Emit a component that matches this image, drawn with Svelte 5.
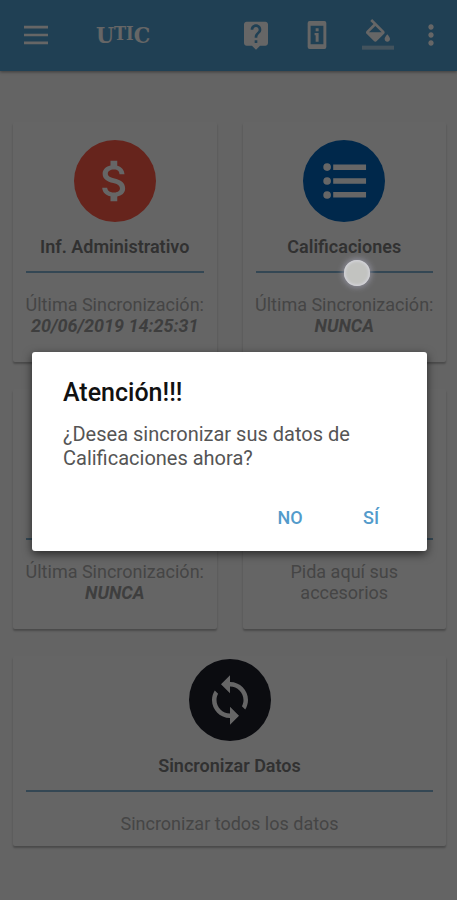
<script>
  const cards = [
    { title: 'Inf. Administrativo', icon: 'money', color: '#ff5a48', text: 'Última Sincronización:', status: '20/06/2019 14:25:31' },
    { title: 'Calificaciones', icon: 'list', color: '#0064bc', text: 'Última Sincronización:', status: 'NUNCA' },
    { text: 'Última Sincronización:', status: 'NUNCA' },
    { text: 'Pida aquí sus accesorios' },
    { title: 'Sincronizar Datos', icon: 'sync', color: '#1c1e2a', text: 'Sincronizar todos los datos', wide: true }
  ];

  const paths = {
    money: 'M11.8 10.9c-2.27-.59-3-1.2-3-2.15 0-1.09 1.01-1.85 2.7-1.85 1.78 0 2.44.85 2.5 2.1h2.21c-.07-1.72-1.12-3.3-3.21-3.81V3h-3v2.16c-1.94.42-3.5 1.68-3.5 3.61 0 2.31 1.91 3.46 4.7 4.13 2.5.6 3 1.48 3 2.41 0 .69-.49 1.79-2.7 1.79-2.06 0-2.87-.92-2.98-2.1h-2.2c.12 2.19 1.76 3.42 3.68 3.83V21h3v-2.15c1.95-.37 3.5-1.5 3.5-3.55 0-2.84-2.43-3.81-4.7-4.4z',
    list: 'M4.500 10.300a1.700 1.700 0 1 0 0 3.400 1.700 1.700 0 0 0 0-3.400zm0-6.200a1.700 1.700 0 1 0 0 3.400 1.700 1.700 0 0 0 0-3.400zm0 12.400a1.700 1.700 0 1 0 0 3.400 1.700 1.700 0 0 0 0-3.400zM7.200 19.300H21.800v-2.400H7.200zM7.200 13.200H21.800v-2.400H7.200zM7.200 4.700v2.400H21.800V4.700z',
    sync: 'M12 4V1L8 5l4 4V6c3.31 0 6 2.690 6 6 0 1.010-.250 1.970-.700 2.800l1.460 1.460C19.540 15.030 20 13.570 20 12c0-4.420-3.580-8-8-8zm0 14c-3.310 0-6-2.690-6-6 0-1.010.250-1.970.700-2.800L5.240 7.740C4.460 8.970 4 10.430 4 12c0 4.420 3.580 8 8 8v3l4-4-4-4v3z'
  };
</script>

<div class="app">
  <header>
    <button class="tool" aria-label="Menú">
      <svg width="36" height="36" viewBox="0 0 24 24"><path d="M4 18.200h16v-1.800H4zM4 12.900h16v-1.800H4zM4 7.600h16V5.800H4z" /></svg>
    </button>
    <h1>U<small>TI</small>C</h1>
    <nav>
      <button class="tool" aria-label="Ayuda">
        <svg width="32" height="32" viewBox="0 0 24 24"><path d="M19 2H5c-1.110 0-2 .900-2 2v14c0 1.100.890 2 2 2h4l3 3 3-3h4c1.100 0 2-.900 2-2V4c0-1.100-.900-2-2-2zm-6 16h-2v-2h2v2zm2.070-7.750-.900.920C13.450 11.900 13 12.500 13 14h-2v-.500c0-1.100.450-2.100 1.170-2.830l1.240-1.260c.370-.360.590-.860.590-1.410 0-1.100-.900-2-2-2s-2 .900-2 2H8c0-2.210 1.790-4 4-4s4 1.790 4 4c0 .880-.360 1.680-.930 2.250z" /></svg>
      </button>
      <button class="tool" aria-label="Información">
        <svg width="32" height="32" viewBox="0 0 24 24"><path fill-rule="evenodd" d="M6.500 1.500h11A1.500 1.500 0 0 1 19 3v18a1.500 1.500 0 0 1-1.500 1.500h-11A1.500 1.500 0 0 1 5 21V3a1.500 1.500 0 0 1 1.500-1.500zM7.200 5v14h9.600V5zM11 7h2.200v2.200H11zm-.800 3.500h3V17H11v-4.800h-.800z" /></svg>
      </button>
      <button class="tool" aria-label="Color de fondo">
        <svg width="32" height="32" viewBox="0 0 24 24"><path d="M16.560 8.940 7.620 0 6.210 1.410l2.380 2.380-5.150 5.150c-.590.590-.590 1.540 0 2.120l5.500 5.500c.290.290.680.440 1.060.440s.770-.150 1.060-.440l5.500-5.500c.590-.580.590-1.530 0-2.120zM5.210 10 10 5.210 14.790 10H5.210zM19 11.500s-2 2.170-2 3.500c0 1.100.900 2 2 2s2-.900 2-2c0-1.330-2-3.500-2-3.500z" /><path class="soft" d="M0 20h24v3H0z" /></svg>
      </button>
      <button class="tool more" aria-label="Más opciones">
        <svg width="32" height="32" viewBox="0 0 24 24"><path d="M12 8c1.100 0 2-.900 2-2s-.900-2-2-2-2 .900-2 2 .900 2 2 2zm0 2c-1.100 0-2 .900-2 2s.900 2 2 2 2-.900 2-2-.900-2-2-2zm0 6c-1.100 0-2 .900-2 2s.900 2 2 2 2-.900 2-2-.900-2-2-2z" /></svg>
      </button>
    </nav>
  </header>

  <main>
    {#each cards as card}
      <section class="card" class:wide={card.wide}>
        <div class="head">
          {#if card.title}
            <div class="disc" style:background={card.color}>
              <svg width="54" height="54" viewBox="0 0 24 24"><path d={paths[card.icon]} /></svg>
            </div>
            <h2>{card.title}</h2>
          {/if}
        </div>
        <p class:narrow={!card.title && !card.status}>{card.text}{#if card.status}<br /><em>{card.status}</em>{/if}</p>
      </section>
    {/each}
  </main>

  <div class="scrim">
    <div class="dialog" role="alertdialog" aria-modal="true" aria-labelledby="dialog-title" aria-describedby="dialog-text">
      <h2 id="dialog-title">Atención!!!</h2>
      <p id="dialog-text">¿Desea sincronizar sus datos de Calificaciones ahora?</p>
      <div class="actions">
        <button>NO</button>
        <button>SÍ</button>
      </div>
    </div>
  </div>
  <span class="touch"></span>
</div>

<style>
  :global(body) {
    margin: 0;
  }
  .app {
    position: relative;
    min-height: 100vh;
    background: #f9f9f9;
    font-family: Roboto, 'Liberation Sans', sans-serif;
  }
  * {
    box-sizing: border-box;
  }
  h1, h2, p {
    margin: 0;
  }
  button {
    border: 0;
    padding: 0;
    background: none;
    font: inherit;
    color: inherit;
  }
  svg {
    display: block;
    fill: currentColor;
  }
  header {
    display: flex;
    align-items: center;
    height: 71px;
    padding: 0 10px 2px 18px;
    background: #52a0d2;
    color: #fff;
    box-shadow: 0 1px 3px rgba(0, 0, 0, 0.4);
  }
  h1 {
    display: flex;
    margin-left: 42px;
    font: bold 23px/24px 'DejaVu Serif Condensed', 'DejaVu Serif', serif;
  }
  small {
    font-size: 18px;
    line-height: 22px;
  }
  nav {
    display: flex;
    gap: 29px;
    margin-left: auto;
  }
  .more {
    margin-left: -8px;
  }
  .soft {
    opacity: 0.5;
  }
  main {
    display: grid;
    grid-template-columns: 1fr 1fr;
    gap: 27px 26px;
    padding: 51px 11px 52px 13px;
  }
  .card {
    padding: 18px 5px 26px;
    border-radius: 2px;
    background: #fdfdfd;
    box-shadow: 0 2px 2px rgba(0, 0, 0, 0.26);
    text-align: center;
  }
  .wide {
    grid-column: 1 / -1;
    padding: 3px 5px 12px;
  }
  .head {
    height: 133px;
    margin: 0 8px;
    border-bottom: 2px solid #82b2d2;
  }
  .disc {
    display: grid;
    place-items: center;
    width: 82px;
    height: 82px;
    margin: 0 auto 14px;
    border-radius: 50%;
    color: #fff;
  }
  .card h2 {
    font-size: 18px;
    font-weight: 600;
    line-height: 22px;
    color: #7c7c7c;
  }
  .card p {
    margin-top: 21px;
    font-size: 18px;
    line-height: 21px;
    color: #acacac;
  }
  .card .narrow {
    padding: 0 30px;
  }
  em {
    font-weight: 700;
    color: #9c9c9c;
  }
  .scrim {
    position: absolute;
    inset: 0;
    display: flex;
    align-items: center;
    padding: 3px 30px 0 32px;
    background: rgba(0, 0, 0, 0.6);
  }
  .dialog {
    width: 100%;
    padding: 27px 27px 16px 31px;
    border-radius: 3px;
    background: #fff;
    box-shadow: 0 3px 10px rgba(0, 0, 0, 0.6);
  }
  .dialog h2 {
    font-size: 25px;
    font-weight: 500;
    line-height: 28px;
    color: #111;
  }
  .dialog p {
    margin-top: 15px;
    font-size: 20px;
    line-height: 24px;
    color: #555;
  }
  .actions {
    display: flex;
    justify-content: flex-end;
    gap: 23px;
    margin-top: 29px;
  }
  .actions button {
    width: 58px;
    height: 36px;
    font-size: 18px;
    font-weight: 500;
    color: #539bcb;
  }
  .touch {
    position: absolute;
    top: 260px;
    left: 344px;
    width: 26px;
    height: 26px;
    border-radius: 50%;
    background: #c2c3c0;
    box-shadow: inset 0 0 3px 1px #d8d8e0, 0 0 6px 1px #9696a4;
    pointer-events: none;
  }
</style>
